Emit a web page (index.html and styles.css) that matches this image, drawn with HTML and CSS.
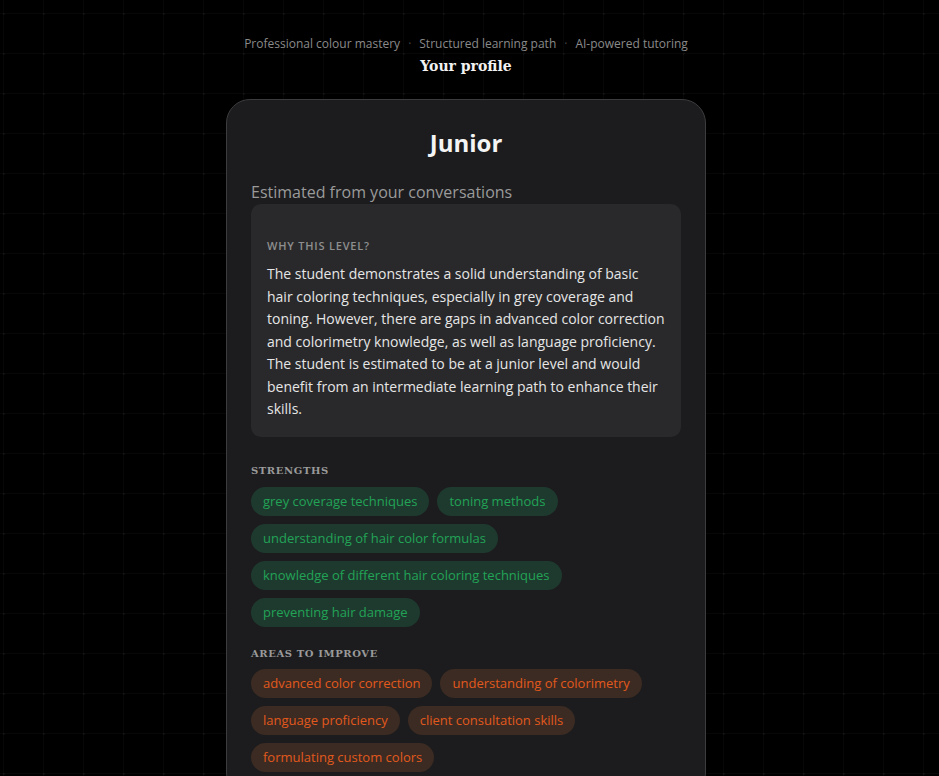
FILE: index.html
```html
<!DOCTYPE html>
<html lang="en">
<head>
    <meta charset="UTF-8">
    <meta name="viewport" content="width=device-width, initial-scale=1.0">
    <title>Your profile</title>
    <link rel="stylesheet" href="styles.css">
</head>
<body>
    <header class="top">
        <div class="tagline">
            <span>Professional colour mastery</span><span class="sep">·</span><span>Structured learning path</span><span class="sep">·</span><span>AI-powered tutoring</span>
        </div>
        <h2 class="page-title">Your profile</h2>
    </header>
    <div class="card">
        <h1 class="level">Junior</h1>
        <p class="subtitle">Estimated from your conversations</p>
        <div class="reason">
            <div class="reason-label">WHY THIS LEVEL?</div>
            <p>The student demonstrates a solid understanding of basic hair coloring techniques, especially in grey coverage and toning. However, there are gaps in advanced color correction and colorimetry knowledge, as well as language proficiency. The student is estimated to be at a junior level and would benefit from an intermediate learning path to enhance their skills.</p>
        </div>
        <div class="section">
            <h3>Strengths</h3>
            <div class="chips">
                <span class="chip good">grey coverage techniques</span>
                <span class="chip good">toning methods</span>
                <span class="chip good">understanding of hair color formulas</span>
                <span class="chip good">knowledge of different hair coloring techniques</span>
                <span class="chip good">preventing hair damage</span>
            </div>
        </div>
        <div class="section">
            <h3>Areas to improve</h3>
            <div class="chips">
                <span class="chip weak">advanced color correction</span>
                <span class="chip weak">understanding of colorimetry</span>
                <span class="chip weak">language proficiency</span>
                <span class="chip weak">client consultation skills</span>
                <span class="chip weak">formulating custom colors</span>
            </div>
        </div>
    </div>
</body>
</html>
```

FILE: styles.css
```css
body {
    margin: 0;
    padding: 0 7px 40px 0;
    font-family: "Open Sans", "Noto Sans", sans-serif;
    color: #e6e6e6;
    background-color: #000;
    background-image:
        radial-gradient(circle at 0.5px 0.5px, #121212 1px, transparent 1.5px),
        linear-gradient(to right, #070707 1px, transparent 1px),
        linear-gradient(to bottom, #070707 1px, transparent 1px);
    background-size: 40px 40px;
    background-position: 3px 13px;
}
.top {
    text-align: center;
    padding-top: 35px;
}
.tagline {
    font-size: 12px;
    line-height: 18px;
    color: #8a8a8a;
}
.tagline .sep {
    margin: 0 8px;
    color: #444;
}
.page-title {
    margin: 3px 0 0;
    font-family: "DejaVu Serif", Georgia, serif;
    font-size: 14px;
    line-height: 20px;
    font-weight: bold;
    color: #f2f2f2;
}
.card {
    width: 430px;
    margin: 23px auto 0;
    padding: 27px 24px 24px;
    background-color: #1c1c1e;
    border: 1px solid #3c3c3e;
    border-radius: 24px;
}
.level {
    margin: 0;
    font-size: 24px;
    line-height: 32px;
    font-weight: bold;
    text-align: center;
    color: #f4f4f4;
}
.subtitle {
    margin: 21px 0 0;
    font-size: 16px;
    line-height: 24px;
    color: #9a9a9a;
}
.reason {
    background-color: #29292b;
    border-radius: 10px;
    padding: 34px 16px 16px;
}
.reason-label {
    font-family: "Open Sans", sans-serif;
    font-size: 11px;
    line-height: 16px;
    font-weight: 600;
    letter-spacing: 0.8px;
    color: #8e8e8e;
}
.reason p {
    margin: 9px 0 0;
    font-size: 14px;
    line-height: 22.5px;
    color: #e6e6e6;
}
.section {
    margin-top: 27px;
}
.section + .section {
    margin-top: 20px;
}
.section h3 {
    margin: 0 0 9px;
    font-family: "DejaVu Serif", Georgia, serif;
    font-size: 10px;
    line-height: 14px;
    font-weight: bold;
    letter-spacing: 0.6px;
    text-transform: uppercase;
    color: #9a9a9a;
}
.section + .section h3 {
    margin-bottom: 8px;
}
.chips {
    display: flex;
    flex-wrap: wrap;
    gap: 8px;
}
.chip {
    font-size: 13px;
    line-height: 19px;
    padding: 5px 12px;
    border-radius: 999px;
}
.chip.good {
    background-color: #1e3a2f;
    color: #22a356;
}
.chip.weak {
    background-color: #3b2b22;
    color: #e2591d;
}
```
